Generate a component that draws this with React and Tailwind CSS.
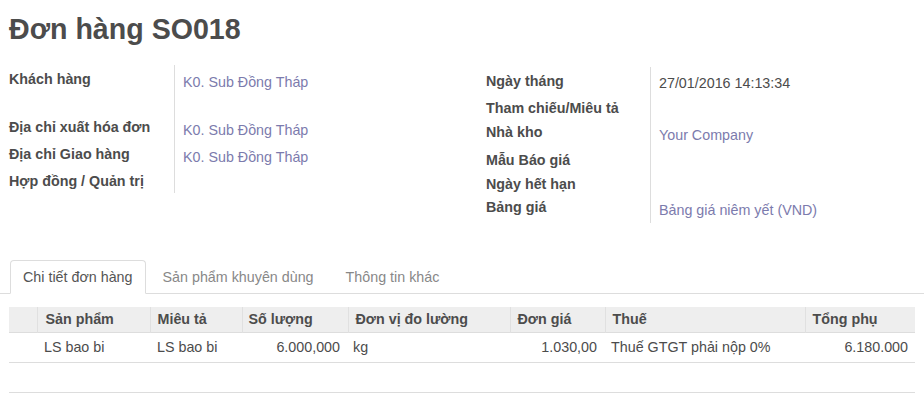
import React from 'react';

const font = { fontFamily: '"Liberation Sans", Arial, sans-serif' };

// Các dòng nhóm bên trái
const leftRows = [
  { label: 'Khách hàng', value: 'K0. Sub Đồng Tháp', h: 'h-[48px]' },
  { label: 'Địa chỉ xuất hóa đơn', value: 'K0. Sub Đồng Tháp', h: 'h-[27px]' },
  { label: 'Địa chỉ Giao hàng', value: 'K0. Sub Đồng Tháp', h: 'h-[27px]' },
  { label: 'Hợp đồng / Quản trị', value: '', h: 'h-[26px]' },
];

// Các dòng nhóm bên phải
const rightRows = [
  { label: 'Ngày tháng', value: '27/01/2016 14:13:34', h: 'h-[27px]', plain: true },
  { label: 'Tham chiếu/Miêu tả', value: '', h: 'h-[24px]' },
  { label: 'Nhà kho', value: 'Your Company', h: 'h-[28px]' },
  { label: 'Mẫu Báo giá', value: '', h: 'h-[24px]' },
  { label: 'Ngày hết hạn', value: '', h: 'h-[23px]' },
  { label: 'Bảng giá', value: 'Bảng giá niêm yết (VND)', h: 'h-[30px]' },
];

const tabs = ['Chi tiết đơn hàng', 'Sản phẩm khuyên dùng', 'Thông tin khác'];

const FieldRow = ({ row, labelW }) => (
  <div className={`flex ${row.h}`}>
    <div className={`${labelW} shrink-0 border-r border-[#dddddd] pt-[4px] font-bold text-[#4c4c4c]`}>
      {row.label}
    </div>
    <div className={`pl-[8px] ${row.plain ? 'pt-[6px] text-[#4c4c4c]' : 'pt-[7px] text-[#7c7bad]'}`}>
      {row.value}
    </div>
  </div>
);

const App = () => {
  return (
    <div style={font} className="min-h-[416px] w-[924px] bg-white px-[9px] text-[14.3px] leading-[20px] text-[#4c4c4c]">
      {/* Tiêu đề */}
      <h1 className="pt-[13px] text-[28.6px] font-bold leading-[32px] text-[#4c4c4c]">Đơn hàng SO018</h1>

      {/* Nhóm thông tin */}
      <div className="mt-[20px] flex items-start">
        <div className="w-[477px]">
          {leftRows.map((r, i) => (
            <FieldRow key={i} row={r} labelW="w-[166px]" />
          ))}
        </div>
        <div className="mt-[2px] w-[429px]">
          {rightRows.map((r, i) => (
            <FieldRow key={i} row={r} labelW="w-[165px]" />
          ))}
        </div>
      </div>

      {/* Tabs */}
      <ul className="-mx-[9px] mt-[37px] flex border-b border-[#dddddd] px-[10px]">
        {tabs.map((t, i) => (
          <li key={t} className="-mb-px mr-[2px]">
            <a
              className={
                i === 0
                  ? 'flex h-[34px] items-center rounded-t-[4px] border border-[#dddddd] border-b-white bg-white px-[12px] text-[#555555]'
                  : 'flex h-[34px] items-center border border-transparent px-[14px] text-[#888888]'
              }
            >
              {t}
            </a>
          </li>
        ))}
      </ul>

      {/* Bảng chi tiết */}
      <table className="mt-[13px] w-[906px] table-fixed border-collapse">
        <colgroup>
          <col className="w-[28px]" />
          <col className="w-[113px]" />
          <col className="w-[92px]" />
          <col className="w-[106px]" />
          <col className="w-[162px]" />
          <col className="w-[95px]" />
          <col className="w-[200px]" />
          <col className="w-[110px]" />
        </colgroup>
        <thead>
          <tr className="h-[25px] border-b border-[#dddddd] bg-[#eeeeee] text-left font-bold">
            <th className="border-r border-[#e0e0e0]"></th>
            <th className="border-r border-[#e0e0e0] px-[7px] pl-[8px]">Sản phẩm</th>
            <th className="border-r border-[#e0e0e0] px-[7px]">Miêu tả</th>
            <th className="border-r border-[#e0e0e0] px-[6px]">Số lượng</th>
            <th className="border-r border-[#e0e0e0] px-[7px]">Đơn vị đo lường</th>
            <th className="border-r border-[#e0e0e0] px-[7px]">Đơn giá</th>
            <th className="border-r border-[#e0e0e0] px-[7px]">Thuế</th>
            <th className="px-[7px]">Tổng phụ</th>
          </tr>
        </thead>
        <tbody>
          <tr className="h-[30px] border-b border-[#dddddd]">
            <td></td>
            <td className="px-[7px]">LS bao bi</td>
            <td className="px-[7px]">LS bao bi</td>
            <td className="px-[8px] text-right">6.000,000</td>
            <td className="px-[5px]">kg</td>
            <td className="px-[8px] text-right">1.030,00</td>
            <td className="px-[6px]">Thuế GTGT phải nộp 0%</td>
            <td className="px-[7px] text-right">6.180.000</td>
          </tr>
          <tr className="h-[30px] border-b border-[#dddddd]">
            <td colSpan={8}></td>
          </tr>
        </tbody>
      </table>
    </div>
  );
};

export default App;
